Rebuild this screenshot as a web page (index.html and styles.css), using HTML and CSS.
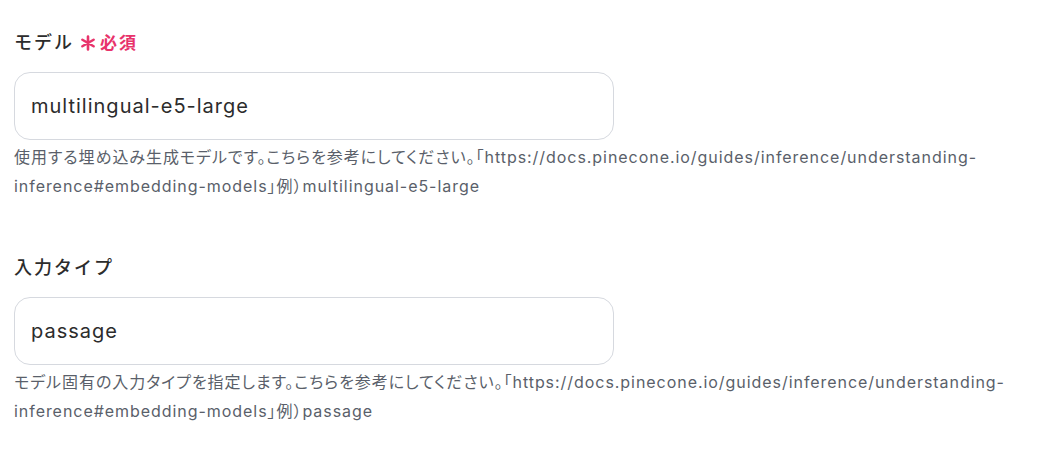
FILE: index.html
```html
<!DOCTYPE html>
<html lang="ja">

<head>
    <meta charset="UTF-8">
    <meta name="viewport" content="width=device-width, initial-scale=1.0">
    <title>フォーム</title>
    <link rel="stylesheet" href="styles.css">
</head>

<body>
    <div class="form">
        <div class="field">
            <label class="field-label">モデル<span class="required-mark"><svg viewBox="0 0 16 16" width="16" height="16"><path d="M8 1.5v13M2.4 4.75l11.2 6.5M2.4 11.25l11.2-6.5" stroke="#e8336b" stroke-width="2.6" stroke-linecap="round" fill="none"/></svg></span><span class="required-text">必須</span></label>
            <div class="field-input">multilingual-e5-large</div>
            <p class="field-help">使用する埋め込み生成モデルです。こちらを参考にしてください。「https://docs.pinecone.io/guides/inference/understanding-inference#embedding-models」例）multilingual-e5-large</p>
        </div>
        <div class="field">
            <label class="field-label">入力タイプ</label>
            <div class="field-input">passage</div>
            <p class="field-help">モデル固有の入力タイプを指定します。こちらを参考にしてください。「https://docs.pinecone.io/guides/inference/understanding-inference#embedding-models」例）passage</p>
        </div>
    </div>
</body>

</html>
```

FILE: styles.css
```css
body {
    margin: 0;
    background: #fff;
    font-family: Inter, "Noto Sans CJK JP", sans-serif;
}

.form {
    width: 1010px;
    padding: 27px 14px 0;
}

.field {
    margin-bottom: 51px;
}

.field-label {
    display: flex;
    align-items: center;
    height: 28px;
    font-size: 18px;
    font-weight: 500;
    letter-spacing: 2px;
    color: #2c2c2c;
}

.required-mark {
    display: flex;
    margin-left: 6px;
    transform: translateY(2px);
}

.required-text {
    margin-left: 4px;
    font-size: 17px;
    font-weight: 700;
    color: #e8336b;
}

.field-input {
    box-sizing: border-box;
    width: 600px;
    height: 68px;
    margin-top: 17px;
    padding: 0 16px;
    display: flex;
    align-items: center;
    border: 1px solid #d6d9df;
    border-radius: 16px;
    font-size: 20px;
    letter-spacing: 1px;
    color: #2c2c2c;
}

.field-help {
    margin: 3px 0 0;
    font-size: 16px;
    line-height: 29px;
    letter-spacing: 0.95px;
    font-feature-settings: "palt";
    color: #5a5f6a;
}
```
